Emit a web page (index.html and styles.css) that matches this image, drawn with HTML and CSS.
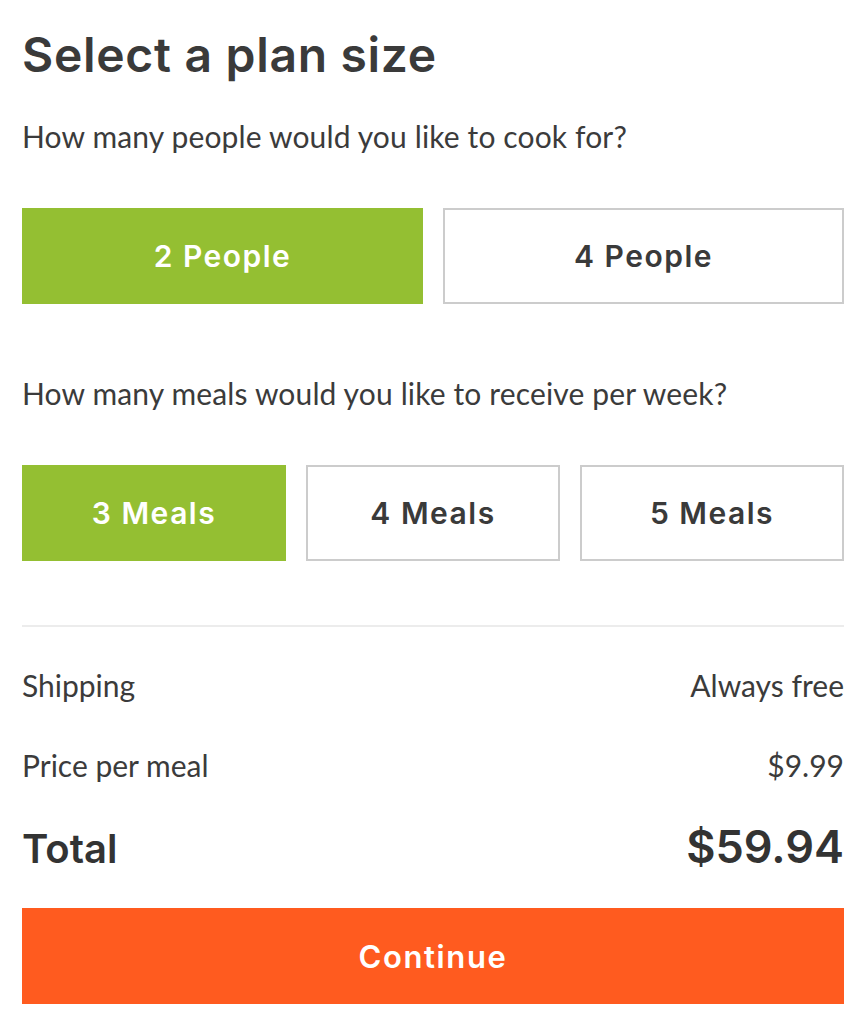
FILE: index.html
```html
<!DOCTYPE html>
<html lang="en">
<head>
<meta charset="utf-8">
<title>Select a plan size</title>
<link rel="stylesheet" href="styles.css">
</head>
<body>
<main class="plan">
  <h1 class="plan-title">Select a plan size</h1>

  <p class="question q-people">How many people would you like to cook for?</p>
  <div class="options options-two">
    <button class="option is-selected">2 People</button>
    <button class="option">4 People</button>
  </div>

  <p class="question q-meals">How many meals would you like to receive per week?</p>
  <div class="options options-three">
    <button class="option is-selected">3 Meals</button>
    <button class="option">4 Meals</button>
    <button class="option">5 Meals</button>
  </div>

  <hr class="divider">

  <div class="summary-row row-shipping">
    <span>Shipping</span>
    <span>Always free</span>
  </div>
  <div class="summary-row row-price">
    <span>Price per meal</span>
    <span>$9.99</span>
  </div>
  <div class="total-row">
    <span class="total-label">Total</span>
    <span class="total-value">$59.94</span>
  </div>

  <button class="continue">Continue</button>
</main>
</body>
</html>
```

FILE: styles.css
```css
* { box-sizing: border-box; }

html, body {
  margin: 0;
  padding: 0;
  background: #ffffff;
}

body {
  color: #3b3b3b;
  font-family: "Lato", "Liberation Sans", sans-serif;
}

.plan {
  padding: 27px 22px 0 22px;
}

.plan-title {
  margin: 0;
  font-family: "Inter", "Liberation Sans", sans-serif;
  font-weight: 600;
  font-size: 48px;
  line-height: 56px;
  color: #3a3a3a;
  letter-spacing: 0.7px;
}

.question {
  margin: 0;
  font-size: 30px;
  line-height: 36px;
  color: #3b3b3b;
  letter-spacing: 0.14px;
}

.q-people { margin-top: 35px; }
.q-meals { margin-top: 71px; }

.options {
  display: grid;
  column-gap: 20px;
  margin-top: 54px;
}

.options-two { grid-template-columns: 1fr 1fr; }
.options-three { grid-template-columns: 264fr 254fr 264fr; }

.option {
  height: 96px;
  border: 2px solid #cccccc;
  background: #ffffff;
  color: #3a3a3a;
  font-family: "Inter", "Liberation Sans", sans-serif;
  font-weight: 600;
  font-size: 30px;
  letter-spacing: 1.5px;
  padding: 0;
  margin: 0;
  cursor: pointer;
}

.option.is-selected {
  background: #94bf32;
  border-color: #94bf32;
  color: #ffffff;
}

.divider {
  margin: 64px 0 0 0;
  border: 0;
  height: 2px;
  background: #ececec;
}

.summary-row {
  display: flex;
  justify-content: space-between;
  font-size: 30px;
  line-height: 36px;
}

.row-shipping { margin-top: 40px; }
.row-price { margin-top: 44px; }

.total-row {
  display: flex;
  justify-content: space-between;
  align-items: baseline;
  margin-top: 40px;
  font-family: "Inter", "Liberation Sans", sans-serif;
  font-weight: 600;
  color: #333333;
  line-height: 48px;
}

.total-label { font-size: 40px; }
.total-value { font-size: 45px; }

.continue {
  display: block;
  width: 100%;
  height: 96px;
  margin-top: 35px;
  border: 0;
  padding: 0;
  background: #ff5b1f;
  color: #ffffff;
  font-family: "Inter", "Liberation Sans", sans-serif;
  font-weight: 600;
  font-size: 31px;
  letter-spacing: 1.6px;
  cursor: pointer;
}
```
